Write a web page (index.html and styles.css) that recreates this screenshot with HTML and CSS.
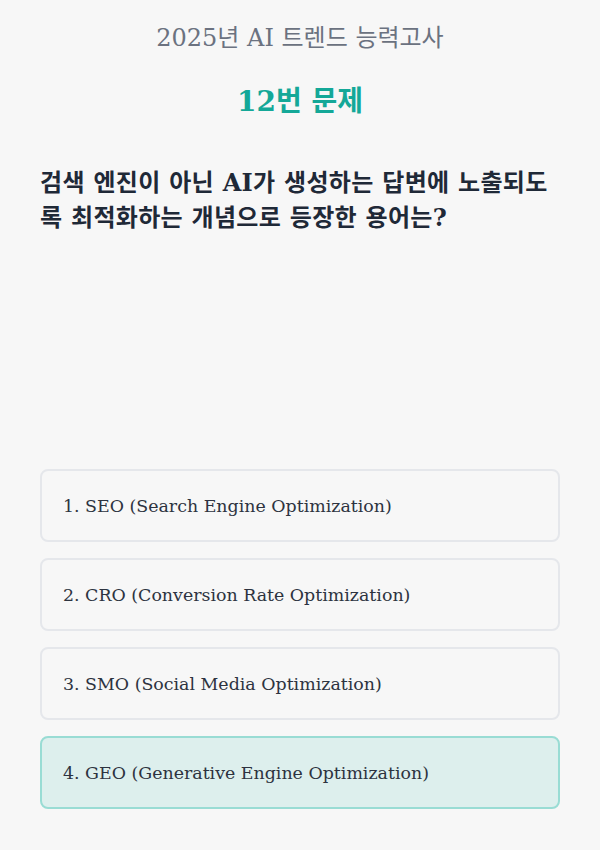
FILE: index.html
```html
<!DOCTYPE html>
<html lang="ko">
<head>
<meta charset="utf-8">
<link rel="stylesheet" href="styles.css">
</head>
<body>
<main class="page">
  <header class="head">
    <p class="exam">2025년 AI 트렌드 능력고사</p>
    <h1 class="num">12번 문제</h1>
  </header>
  <h2 class="question">검색 엔진이 아닌 AI가 생성하는 답변에 노출되도록 최적화하는 개념으로 등장한 용어는?</h2>
  <ul class="options">
    <li class="option">1. SEO (Search Engine Optimization)</li>
    <li class="option">2. CRO (Conversion Rate Optimization)</li>
    <li class="option">3. SMO (Social Media Optimization)</li>
    <li class="option selected">4. GEO (Generative Engine Optimization)</li>
  </ul>
</main>
</body>
</html>
```
FILE: styles.css
```css
html, body {
  margin: 0;
  padding: 0;
  background: #f7f7f7;
}
body {
  font-family: "DejaVu Serif", "Noto Sans CJK KR", serif;
}
.page {
  box-sizing: border-box;
  min-height: 850px;
  padding: 22px 40px 41px;
  display: flex;
  flex-direction: column;
}
.head {
  text-align: center;
}
.exam {
  margin: 0;
  font-size: 24px;
  line-height: 32px;
  color: #6b7280;
  font-weight: 400;
}
.num {
  margin: 30px 0 0;
  font-size: 28px;
  line-height: 36px;
  color: #14a898;
  font-weight: 700;
}
.question {
  margin: 45px 0 0;
  font-size: 24px;
  line-height: 35px;
  letter-spacing: 0.3px;
  color: #1f2937;
  font-weight: 700;
}
.options {
  list-style: none;
  margin: auto 0 0;
  padding: 0;
  display: flex;
  flex-direction: column;
  gap: 16px;
}
.option {
  box-sizing: border-box;
  height: 73px;
  display: flex;
  align-items: center;
  padding: 0 21px;
  border: 2px solid #e5e7eb;
  border-radius: 8px;
  font-size: 17.4px;
  color: #2d3340;
}
.option.selected {
  background: #ddefed;
  border-color: #99dcd4;
}
```
